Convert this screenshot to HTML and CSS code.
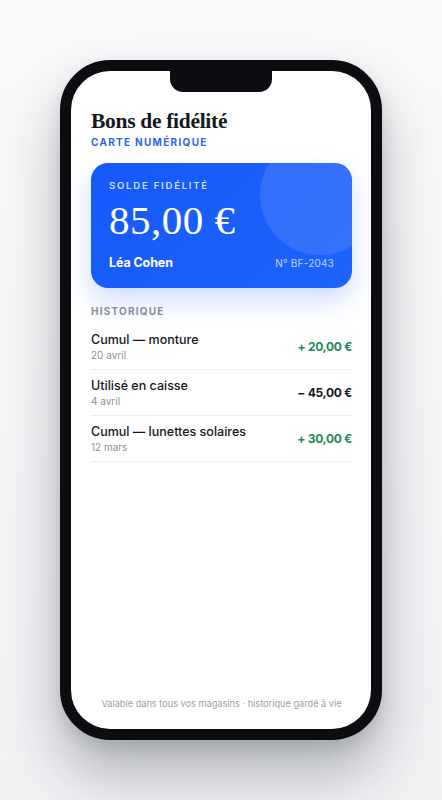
FILE: index.html
```html
<!DOCTYPE html>
<html lang="fr">
<head>
<meta charset="utf-8">
<title>Bons de fidélité</title>
<link rel="stylesheet" href="styles.css">
</head>
<body>
<div class="stage">
  <div class="phone">
    <div class="screen">
      <div class="notch"></div>
      <header class="head">
        <h1 class="title">Bons de fidélité</h1>
        <div class="subtitle">CARTE NUMÉRIQUE</div>
      </header>
      <section class="card">
        <div class="card-deco"></div>
        <div class="card-label">SOLDE FIDÉLITÉ</div>
        <div class="card-amount">85,00 €</div>
        <div class="card-foot">
          <span class="card-name">Léa Cohen</span>
          <span class="card-num">N° BF-2043</span>
        </div>
      </section>
      <section class="history">
        <div class="history-label">HISTORIQUE</div>
        <div class="row">
          <div class="row-info">
            <div class="row-title">Cumul — monture</div>
            <div class="row-date">20 avril</div>
          </div>
          <div class="row-amount pos">+ 20,00 €</div>
        </div>
        <div class="row">
          <div class="row-info">
            <div class="row-title">Utilisé en caisse</div>
            <div class="row-date">4 avril</div>
          </div>
          <div class="row-amount neg">− 45,00 €</div>
        </div>
        <div class="row">
          <div class="row-info">
            <div class="row-title">Cumul — lunettes solaires</div>
            <div class="row-date">12 mars</div>
          </div>
          <div class="row-amount pos">+ 30,00 €</div>
        </div>
      </section>
      <footer class="foot">Valable dans tous vos magasins · historique gardé à vie</footer>
    </div>
  </div>
</div>
</body>
</html>
```
FILE: styles.css
```css
* { box-sizing: border-box; margin: 0; padding: 0; }
html, body { width: 442px; height: 800px; }
body {
  background: linear-gradient(180deg, #f8f9fa 0%, #f0f1f3 100%);
  font-family: Inter, "Noto Sans", sans-serif;
  overflow: hidden;
}
.stage {
  display: flex;
  justify-content: center;
  padding-top: 60px;
}
.phone {
  width: 322px;
  height: 680px;
  border: 11px solid #0c0d11;
  border-radius: 50px;
  background: #0c0d11;
  box-shadow: 0 34px 56px rgba(30, 35, 50, 0.30), 0 8px 16px rgba(30, 35, 50, 0.12);
}
.screen {
  position: relative;
  height: 100%;
  background: #ffffff;
  border-radius: 39px;
  overflow: hidden;
  display: flex;
  flex-direction: column;
  padding: 37px 19px 0 20px;
}
.notch {
  position: absolute;
  top: 0;
  left: 99px;
  width: 102px;
  height: 21px;
  background: #0c0d11;
  border-radius: 0 0 13px 13px;
}
.title {
  font-family: "Liberation Serif", "DejaVu Serif", serif;
  font-weight: 700;
  font-size: 21.5px;
  line-height: 27px;
  color: #15171d;
  letter-spacing: -0.3px;
}
.subtitle {
  margin-top: 1px;
  font-size: 10px;
  line-height: 12px;
  font-weight: 700;
  letter-spacing: 1.3px;
  color: #2d66ee;
}
.card {
  position: relative;
  overflow: hidden;
  margin-top: 15px;
  height: 125px;
  border-radius: 17px;
  background: linear-gradient(135deg, #1559fb 0%, #1e63fb 100%);
  padding: 17px 18px 0 18px;
  color: #ffffff;
  box-shadow: 0 12px 26px rgba(30, 95, 250, 0.22);
  display: flex;
  flex-direction: column;
}
.card-deco {
  position: absolute;
  top: -28px;
  right: -28px;
  width: 120px;
  height: 120px;
  border-radius: 50%;
  background: rgba(255, 255, 255, 0.11);
}
.card-label {
  font-size: 9.5px;
  line-height: 12px;
  font-weight: 600;
  letter-spacing: 1.8px;
  color: rgba(255, 255, 255, 0.82);
}
.card-amount {
  margin-top: 6px;
  font-family: "Liberation Serif", "DejaVu Serif", serif;
  font-size: 41px;
  line-height: 44px;
  font-weight: 400;
  letter-spacing: 0.5px;
}
.card-foot {
  margin-top: 13px;
  display: flex;
  justify-content: space-between;
  align-items: baseline;
}
.card-name {
  font-size: 12.5px;
  font-weight: 700;
  letter-spacing: -0.1px;
}
.card-num {
  font-size: 10px;
  color: rgba(255, 255, 255, 0.72);
  letter-spacing: 0.2px;
}
.history {
  margin-top: 17px;
  display: flex;
  flex-direction: column;
}
.history-label {
  font-size: 10px;
  line-height: 12px;
  font-weight: 700;
  letter-spacing: 1.2px;
  color: #8b8f98;
  margin-bottom: 7px;
}
.row {
  display: flex;
  justify-content: space-between;
  align-items: center;
  height: 46px;
  border-bottom: 1px solid #eceef1;
}
.row-info {
  display: flex;
  flex-direction: column;
  gap: 1px;
}
.row-title {
  font-size: 12.5px;
  line-height: 16px;
  font-weight: 500;
  color: #15171d;
}
.row-date {
  font-size: 10px;
  line-height: 13px;
  color: #8d9199;
}
.row-amount {
  font-size: 12px;
  font-weight: 700;
  letter-spacing: -0.3px;
}
.row-amount.pos { color: #1c8a55; }
.row-amount.neg { color: #15171d; }
.foot {
  margin-top: auto;
  margin-bottom: 19px;
  text-align: center;
  font-size: 9.2px;
  line-height: 12px;
  color: #9b9fa7;
}
```
